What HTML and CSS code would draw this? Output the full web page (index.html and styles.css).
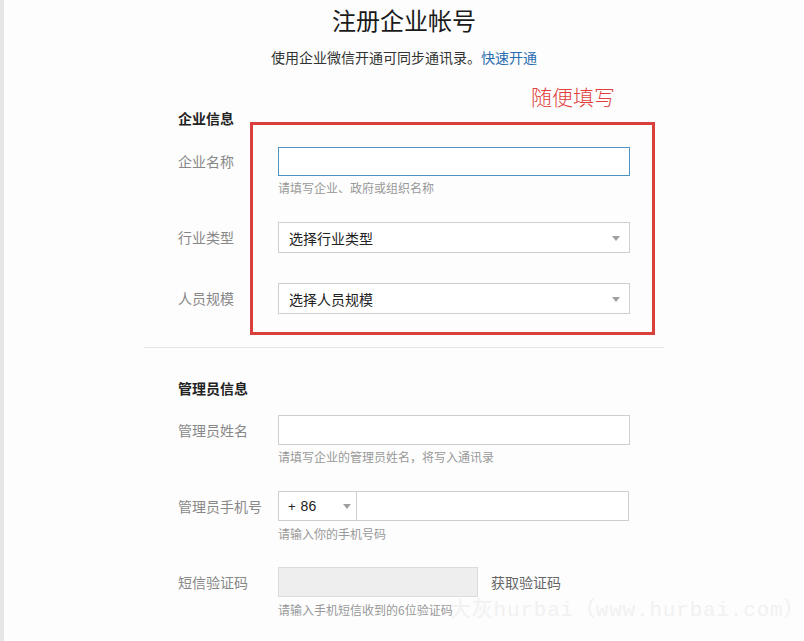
FILE: index.html
```html
<!DOCTYPE html>
<html lang="zh-CN">
<head>
<meta charset="utf-8">
<title>注册企业帐号</title>
<link rel="stylesheet" href="styles.css">
</head>
<body>
<div class="page">
  <div class="container">
    <header class="header">
      <h1 class="title">注册企业帐号</h1>
      <p class="subtitle">使用企业微信开通可同步通讯录。<a class="link" href="#">快速开通</a></p>
    </header>

    <section class="section first">
      <div class="section-title">企业信息</div>
      <div class="row row-name">
        <div class="label">企业名称</div>
        <div class="field">
          <div class="input focused"></div>
          <div class="hint">请填写企业、政府或组织名称</div>
        </div>
      </div>
      <div class="row row-industry">
        <div class="label label-select">行业类型</div>
        <div class="field">
          <div class="select"><span>选择行业类型</span><i class="arrow"></i></div>
        </div>
      </div>
      <div class="row row-size">
        <div class="label label-select">人员规模</div>
        <div class="field">
          <div class="select"><span>选择人员规模</span><i class="arrow"></i></div>
        </div>
      </div>
    </section>

    <div class="divider"></div>

    <section class="section second">
      <div class="section-title">管理员信息</div>
      <div class="row row-admin">
        <div class="label">管理员姓名</div>
        <div class="field">
          <div class="input"></div>
          <div class="hint">请填写企业的管理员姓名，将写入通讯录</div>
        </div>
      </div>
      <div class="row row-phone">
        <div class="label">管理员手机号</div>
        <div class="field">
          <div class="phone">
            <div class="prefix"><span class="plus">+</span><span>86</span><i class="arrow"></i></div>
            <div class="phone-input"></div>
          </div>
          <div class="hint">请输入你的手机号码</div>
        </div>
      </div>
      <div class="row row-code">
        <div class="label">短信验证码</div>
        <div class="field">
          <div class="code">
            <div class="code-input"></div>
            <span class="get-code">获取验证码</span>
          </div>
          <div class="hint">请输入手机短信收到的6位验证码</div>
        </div>
      </div>
    </section>
  </div>

  <div class="annotation-box"></div>
  <div class="annotation-text">随便填写</div>
  <div class="watermark">大灰hurbai（www.hurbai.com）</div>
</div>
</body>
</html>
```
FILE: styles.css
```css
html, body {
  margin: 0;
  padding: 0;
}
body {
  background: #fdfdfd;
  font-family: "Noto Sans CJK SC", "Liberation Sans", sans-serif;
  color: #222;
}
.page {
  position: relative;
  min-height: 641px;
  border-left: 4px solid #e6e6e6;
  overflow: hidden;
}
.container {
  width: 520px;
  margin: 0 auto;
}
.header {
  text-align: center;
}
.title {
  margin: 0;
  padding-top: 4px;
  font-size: 24px;
  line-height: 32px;
  font-weight: normal;
  color: #1a1a1a;
}
.subtitle {
  margin: 11px 0 0;
  font-size: 14px;
  line-height: 20px;
  color: #333;
}
.link {
  color: #2b6cb0;
  text-decoration: none;
}
.section {
  padding-left: 34px;
}
.section.first {
  margin-top: 41px;
}
.section-title {
  font-size: 14px;
  line-height: 20px;
  font-weight: bold;
  color: #222;
}
.row {
  display: flex;
}
.label {
  width: 100px;
  flex: none;
  font-size: 14px;
  line-height: 29px;
  color: #888;
}
.label-select {
  line-height: 31px;
}
.field {
  width: 352px;
}
.input {
  box-sizing: border-box;
  width: 352px;
  height: 29px;
  border: 1px solid #cfcfcf;
  background: #fff;
}
.input.focused {
  border-color: #4f93c0;
}
.hint {
  margin-top: 4px;
  font-size: 12px;
  line-height: 16px;
  color: #999;
}
.row-name {
  margin-top: 19px;
}
.row-industry {
  margin-top: 26px;
}
.row-size {
  margin-top: 30px;
}
.select {
  position: relative;
  box-sizing: border-box;
  width: 352px;
  height: 31px;
  display: flex;
  align-items: center;
  padding-left: 10px;
  border: 1px solid #cfcfcf;
  background: #fff;
  font-size: 14px;
  color: #222;
}
.arrow {
  position: absolute;
  right: 9px;
  top: 50%;
  margin-top: -2px;
  width: 0;
  height: 0;
  border-left: 4px solid transparent;
  border-right: 4px solid transparent;
  border-top: 5px solid #a0a0a0;
}
.divider {
  margin-top: 33px;
  height: 1px;
  background: #e6e6e6;
}
.section.second {
  margin-top: 30px;
}
.row-admin {
  margin-top: 17px;
}
.row-admin .label,
.row-phone .label,
.row-code .label {
  line-height: 30px;
}
.row-admin .input {
  height: 30px;
}
.row-phone {
  margin-top: 26px;
}
.phone {
  display: flex;
  width: 351px;
  height: 30px;
  box-sizing: border-box;
  border: 1px solid #cfcfcf;
  background: #fff;
}
.prefix {
  position: relative;
  width: 78px;
  flex: none;
  display: flex;
  align-items: center;
  padding-left: 9px;
  box-sizing: border-box;
  border-right: 1px solid #cfcfcf;
  font-family: "Liberation Sans", "Noto Sans CJK SC", sans-serif;
  font-size: 14px;
  color: #222;
}
.plus {
  margin-right: 5px;
  font-size: 13px;
}
.prefix .arrow {
  right: 5px;
}
.phone-input {
  flex: 1;
}
.row-phone .hint {
  margin-top: 5px;
}
.row-code {
  margin-top: 25px;
}
.code {
  display: flex;
  align-items: center;
}
.code-input {
  box-sizing: border-box;
  width: 200px;
  height: 30px;
  border: 1px solid #dcdcdc;
  background: #eeeeee;
}
.get-code {
  margin-left: 13px;
  font-size: 14px;
  color: #666;
}
.row-code .hint {
  margin-top: 5px;
}
.annotation-box {
  position: absolute;
  left: 246px;
  top: 122px;
  width: 405px;
  height: 213px;
  box-sizing: border-box;
  border: 3px solid #d9403c;
}
.annotation-text {
  position: absolute;
  left: 527px;
  top: 83px;
  font-size: 21px;
  line-height: 26px;
  color: #e0413c;
  font-family: "Noto Sans CJK SC", sans-serif;
  font-weight: 300;
}
.watermark {
  position: absolute;
  left: 446px;
  top: 597px;
  font-family: "Liberation Mono", "Noto Sans CJK SC", monospace;
  font-size: 21px;
  line-height: 28px;
  letter-spacing: 0.8px;
  color: #f1f1f1;
  white-space: nowrap;
}
```
